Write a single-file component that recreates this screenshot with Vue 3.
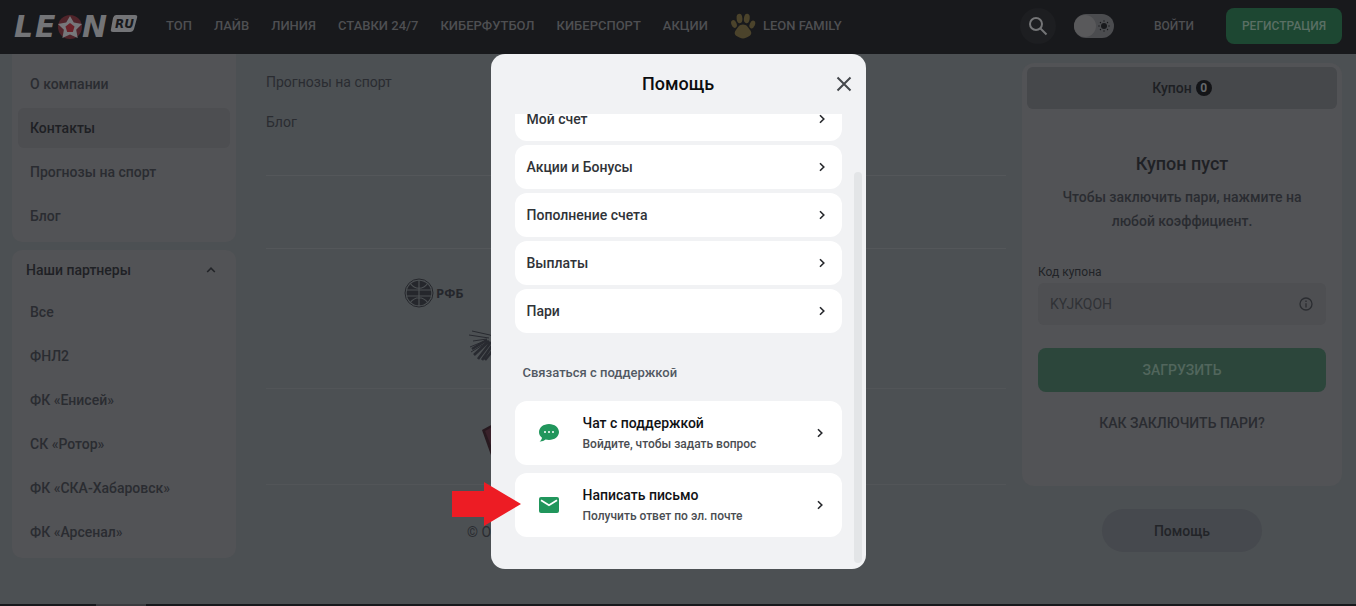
<script setup>
const nav = ['ТОП', 'ЛАЙВ', 'ЛИНИЯ', 'СТАВКИ 24/7', 'КИБЕРФУТБОЛ', 'КИБЕРСПОРТ', 'АКЦИИ']
const company = ['О компании', 'Контакты', 'Прогнозы на спорт', 'Блог']
const partners = ['Все', 'ФНЛ2', 'ФК «Енисей»', 'СК «Ротор»', 'ФК «СКА-Хабаровск»', 'ФК «Арсенал»']
const topics = ['Мой счет', 'Акции и Бонусы', 'Пополнение счета', 'Выплаты', 'Пари']
const rays = [0, 45, 90, 135, 180, 225, 270, 315]
</script>

<template>
  <div class="page">
    <header class="top">
      <a href="#" class="logo" aria-label="LEON RU">
        <svg width="126" height="40" viewBox="0 0 126 40">
          <text x="1" y="31" class="brand">L</text>
          <text x="22" y="31" class="brand">E</text>
          <circle cx="57" cy="21" r="12" fill="#50242a" />
          <path d="M57 10l3.800 6.500 8.200 1.500-5.800 5.700 1.500 8.300-7.700-3.600-7.600 3.600 1.500-8.300-6-5.700 8.300-1.500z" fill="#77777a" />
          <path d="M57 17l4.500 3.500-1.700 5.500h-5.600l-1.700-5.500z" fill="#6b2229" />
          <text x="69" y="31" class="brand">N</text>
          <path d="M103 9h19q3 0 2 3l-3 11q-1 3-4 3H100q-3 0-2-3l2-11q1-3 3-3z" fill="#737477" />
          <text x="102" y="22" class="ru">RU</text>
        </svg>
      </a>
      <nav class="nav">
        <a v-for="n in nav" :key="n" href="#">{{ n }}</a>
        <a href="#" class="family">
          <svg width="26" height="26" viewBox="0 0 26 26" fill="#4b432b">
            <ellipse cx="4" cy="11" rx="2.600" ry="4" transform="rotate(-22 4 11)" />
            <ellipse cx="9.500" cy="5.500" rx="2.900" ry="4.700" transform="rotate(-5 9.500 5.500)" />
            <ellipse cx="16.800" cy="5.500" rx="2.900" ry="4.700" transform="rotate(8 16.800 5.500)" />
            <ellipse cx="22.300" cy="11.500" rx="2.600" ry="4" transform="rotate(24 22.300 11.500)" />
            <path d="M13 11.500c4 0 5 3 7 5.500 2.500 3 1 5.500-1.500 6.500-2 .8-3 2-5.500 2s-3.500-1.200-5.500-2C5 22.500 3.500 20 6 17c2-2.500 3-5.500 7-5.500z" />
          </svg>
          LEON FAMILY
        </a>
      </nav>
      <div class="actions">
        <button class="search" aria-label="Поиск">
          <svg width="20" height="20" viewBox="0 0 20 20" fill="none" stroke="#747577" stroke-width="2">
            <circle cx="8" cy="8" r="6" /><path d="M12.500 12.500l6 6" />
          </svg>
        </button>
        <button class="toggle" role="switch" aria-checked="false" aria-label="Тема">
          <i class="knob"></i>
          <svg width="14" height="14" viewBox="0 0 14 14">
            <circle cx="7" cy="7" r="3" fill="#18191c" />
            <circle v-for="r in rays" :key="r" cx="7" cy="2" r="0.700" fill="#18191c" :transform="`rotate(${r} 7 7)`" />
          </svg>
        </button>
        <a href="#" class="login">ВОЙТИ</a>
        <button class="register">РЕГИСТРАЦИЯ</button>
      </div>
    </header>

    <div class="columns">
      <aside class="side">
        <nav class="box first">
          <a v-for="c in company" :key="c" href="#" :class="{ on: c === 'Контакты' }">{{ c }}</a>
        </nav>
        <nav class="box second">
          <button class="fold" aria-expanded="true">
            Наши партнеры
            <svg width="10" height="8" viewBox="0 0 10 8" fill="none" stroke="#222428" stroke-width="1.600"><path d="M1.200 6L5 2.200 8.800 6" /></svg>
          </button>
          <a v-for="p in partners" :key="p" href="#">{{ p }}</a>
        </nav>
      </aside>

      <main class="main">
        <div class="links">
          <a href="#">Прогнозы на спорт</a>
          <a href="#">Блог</a>
        </div>
        <div class="blank"></div>
        <div class="sponsors">
          <a href="#" class="rfb">
            <svg width="30" height="30" viewBox="0 0 30 30" fill="none">
              <circle cx="15" cy="15" r="14" stroke="#25272c" />
              <circle cx="15" cy="15" r="12.300" fill="#25272c" />
              <path d="M15 2v26M2 12h26M2 18h26M6 5c5 7 13 7 18 0M6 25c5-7 13-7 18 0" stroke="#4c5053" stroke-width="1.200" />
            </svg>
            РФБ
          </a>
          <svg class="feather" width="40" height="34" viewBox="0 0 40 34" fill="none" stroke="#282a30">
            <path d="M4 2l18 4 14 8M1 6l20 3M5 12l14-2M2 18l17-7M3 23l18-11" />
            <path d="M19 11L4 20M21 12L6 26M23 13l-13 17M26 14l-12 17M30 15l-13 16" stroke-width="2.600" />
          </svg>
        </div>
        <div class="club">
          <svg width="28" height="34" viewBox="0 0 28 34"><path d="M1 6L12 0h14v34H11z" fill="#27191f" /><path d="M4 7l9-5v27z" fill="#39212a" /></svg>
        </div>
        <footer class="copy">© ООО</footer>
      </main>

      <aside class="right">
        <section class="coupon">
          <button class="tab">Купон <b>0</b></button>
          <div class="inner">
            <h2>Купон пуст</h2>
            <p>Чтобы заключить пари, нажмите на любой коэффициент.</p>
            <label for="code">Код купона</label>
            <div class="field">
              <input id="code" type="text" placeholder="KYJKQOH" />
              <svg width="14" height="14" viewBox="0 0 14 14" fill="none" stroke="#2b2d31" stroke-width="1.300">
                <circle cx="7" cy="7" r="6" /><path d="M7 6.200V10.500M7 3.500v1.400" />
              </svg>
            </div>
            <button class="load">ЗАГРУЗИТЬ</button>
            <a href="#" class="how">КАК ЗАКЛЮЧИТЬ ПАРИ?</a>
          </div>
        </section>
        <button class="help">Помощь</button>
      </aside>
    </div>
    <div class="strip"><i></i></div>

    <div class="overlay">
      <section class="modal" role="dialog" aria-labelledby="dlg">
        <header class="mhead">
          <h1 id="dlg">Помощь</h1>
          <button class="close" aria-label="Закрыть">
            <svg width="16" height="16" viewBox="0 0 16 16" stroke="#45484c" stroke-width="2"><path d="M1.500 1.500l13 13M14.500 1.500l-13 13" /></svg>
          </button>
        </header>
        <div class="mbody">
          <a v-for="t in topics" :key="t" href="#" class="topic">
            {{ t }}
            <svg width="8" height="10" viewBox="0 0 8 10" fill="none" stroke="#26282c" stroke-width="1.600"><path d="M2 1.200L5.800 5 2 8.800" /></svg>
          </a>
          <h3>Связаться с поддержкой</h3>
          <a href="#" class="contact">
            <svg width="22" height="20" viewBox="0 0 22 20">
              <path d="M11 1C5.400 1 1 4.600 1 9c0 2.300 1.100 4.300 3 5.800-.2 1.500-1 2.700-2.400 3.700 2.400.1 4.400-.6 6-1.900 1.100.3 2.200.4 3.400.4 5.600 0 10-3.600 10-8s-4.400-8-10-8z" fill="#21965c" />
              <g fill="#fff"><circle cx="7" cy="9" r="1" /><circle cx="11" cy="9" r="1" /><circle cx="15" cy="9" r="1" /></g>
            </svg>
            <span class="txt"><strong>Чат с поддержкой</strong><small>Войдите, чтобы задать вопрос</small></span>
            <svg width="8" height="10" viewBox="0 0 8 10" fill="none" stroke="#26282c" stroke-width="1.600"><path d="M2 1.200L5.800 5 2 8.800" /></svg>
          </a>
          <a href="#" class="contact">
            <svg width="22" height="20" viewBox="0 0 22 20">
              <rect x="1" y="2" width="20" height="16" rx="2" fill="#21965c" />
              <path d="M3 5.200l8 5 8-5" fill="none" stroke="#fff" stroke-width="1.800" />
            </svg>
            <span class="txt"><strong>Написать письмо</strong><small>Получить ответ по эл. почте</small></span>
            <svg width="8" height="10" viewBox="0 0 8 10" fill="none" stroke="#26282c" stroke-width="1.600"><path d="M2 1.200L5.800 5 2 8.800" /></svg>
          </a>
        </div>
        <i class="thumb"></i>
        <svg class="arrow" width="70" height="44" viewBox="0 0 70 44"><path d="M0 9h32V0l37 22-37 22v-9H0z" fill="#ed1c24" /></svg>
      </section>
    </div>
  </div>
</template>

<style>
body { background: #4c5053; }
</style>

<style scoped>
* { box-sizing: border-box; }
.page {
  position: relative;
  min-height: 100vh;
  display: flex;
  flex-direction: column;
  overflow: hidden;
  background: #4c5053;
  color: #2a2c31;
  font: 500 14px/20px Roboto, "Liberation Sans", sans-serif;
}
a { color: inherit; text-decoration: none; }
button { border: 0; background: none; padding: 0; font: inherit; color: inherit; }
svg { display: block; flex: none; }
h1, h2, h3, p { margin: 0; font-weight: 500; }

.top {
  height: 54px;
  flex: none;
  display: flex;
  align-items: center;
  padding: 0 14px 2px 13px;
  background: #18191c;
  color: #4e4f52;
  font-size: 13px;
}
.logo { margin-right: 27px; }
.logo svg { overflow: visible; }
.brand { font: italic 700 30px "DejaVu Sans", sans-serif; fill: #737477; }
.ru { font: italic 700 12px "DejaVu Sans", sans-serif; fill: #18191c; }
.nav { display: flex; align-items: center; gap: 22px; white-space: nowrap; }
.family { display: flex; align-items: center; gap: 7px; }
.actions { display: flex; align-items: center; margin-left: auto; }
.search { width: 36px; height: 36px; border-radius: 50%; background: #1d1e21; display: grid; place-items: center; }
.toggle { width: 40px; height: 24px; margin-left: 18px; padding: 0 3px 0 0; border-radius: 12px; background: #4b4c4f; display: flex; align-items: center; justify-content: space-between; }
.knob { width: 22px; height: 22px; border-radius: 50%; background: #59595b; }
.login { margin: 0 32px 0 40px; font-size: 12px; }
.register { height: 36px; width: 116px; border-radius: 8px; background: #1d4732; color: #5a6f64; font-size: 12px; }

.columns { flex: 1; display: flex; align-items: flex-start; padding: 0 14px 0 12px; }
.side { width: 224px; flex: none; display: grid; gap: 8px; }
.box { display: flex; flex-direction: column; gap: 4px; padding: 6px; background: #525356; border-radius: 10px; }
.first { padding-top: 10px; border-radius: 0 0 10px 10px; }
.box a { height: 40px; display: flex; align-items: center; padding: 0 12px; border-radius: 6px; }
.box .on { background: #4d4e51; color: #1e2024; }
.second { padding-top: 0; }
.fold { height: 40px; display: flex; align-items: center; justify-content: space-between; padding: 0 14px 0 8px; color: #1f2125; margin-bottom: -2px; }

.main { flex: 1; min-width: 0; margin: 0 16px 0 30px; font-weight: 400; }
.links { height: 122px; padding-top: 18px; display: flex; flex-direction: column; gap: 20px; border-bottom: 1px solid #54575a; }
.blank { height: 73px; border-bottom: 1px solid #54575a; }
.sponsors { height: 140px; border-bottom: 1px solid #525558; padding: 29px 0 0 138px; }
.rfb { display: flex; align-items: center; gap: 2px; font: 700 13px/20px "Open Sans", sans-serif; color: #25272c; }
.feather { margin: 21px 0 0 64px; }
.club { height: 96px; border-bottom: 1px solid #525558; padding: 35px 0 0 215px; }
.copy { padding: 37px 0 0 201px; }

.right { width: 320px; flex: none; padding-top: 9px; display: flex; flex-direction: column; align-items: center; }
.coupon { width: 100%; padding: 4px 5px 53px; border-radius: 12px; background: #525356; }
.tab { width: 100%; height: 42px; border-radius: 6px; background: #46484b; color: #1d1f23; display: flex; align-items: center; justify-content: center; gap: 4px; }
.tab b { width: 16px; height: 16px; border-radius: 50%; background: #131417; color: #66686b; font-size: 12px; line-height: 16px; }
.inner { padding: 43px 11px 0; display: flex; flex-direction: column; text-align: center; }
h2 { font-size: 18px; line-height: 24px; color: #1f2125; }
p { margin-top: 9px; padding: 0 16px; line-height: 24px; }
label { margin-top: 29px; text-align: left; font: 400 12px/20px Roboto, sans-serif; color: #212327; }
.field { height: 42px; margin-top: 1px; padding: 0 13px 0 12px; border-radius: 6px; background: #4e4f52; display: flex; align-items: center; }
input { flex: 1; min-width: 0; border: 0; padding: 0; background: none; font: 400 14px/20px Roboto, sans-serif; }
input::placeholder { color: #303236; opacity: 1; }
.load { height: 44px; margin-top: 23px; border-radius: 8px; background: #2c463b; color: #52665d; }
.how { margin-top: 21px; }
.help { width: 160px; height: 43px; margin-top: 23px; border-radius: 22px; background: #46494e; color: #222428; }
.strip { height: 2px; background: #17181c; }
.strip i { display: block; width: 50px; height: 2px; margin-left: 96px; background: #3a3b3f; }

.overlay { position: absolute; inset: 0; padding: 54px 16px 37px; display: flex; justify-content: center; }
.modal { position: relative; width: 375px; height: calc(100vh - 91px); display: flex; flex-direction: column; border-radius: 14px; background: #f1f2f4; }
.mhead { position: relative; height: 60px; flex: none; display: grid; place-items: center; }
h1 { font-size: 18px; line-height: 24px; color: #0c0d0f; }
.close { position: absolute; right: 14px; top: 22px; }
.mbody { flex: 1; min-height: 0; overflow: hidden; display: flex; flex-direction: column; justify-content: flex-end; padding: 0 24px 32px; }
.topic { height: 44px; flex: none; margin-top: 4px; padding: 0 16px 0 12px; border-radius: 12px; background: #fff; color: #303338; display: flex; align-items: center; justify-content: space-between; }
h3 { margin: 30px 8px 18px; flex: none; font-size: 13px; line-height: 20px; color: #515963; }
.contact { height: 64px; flex: none; padding: 0 18px 0 23px; border-radius: 12px; background: #fff; display: flex; align-items: center; }
.contact + .contact { margin-top: 8px; }
.txt { flex: 1; margin-left: 23px; display: grid; }
strong { font-weight: 500; color: #111215; line-height: 22px; }
small { font-size: 12px; line-height: 20px; color: #4a4d52; }
.thumb { position: absolute; right: 4px; top: 118px; bottom: 6px; width: 8px; border-radius: 4px; background: #e3e5e7; }
.arrow { position: absolute; left: -39px; bottom: 43px; }
</style>
